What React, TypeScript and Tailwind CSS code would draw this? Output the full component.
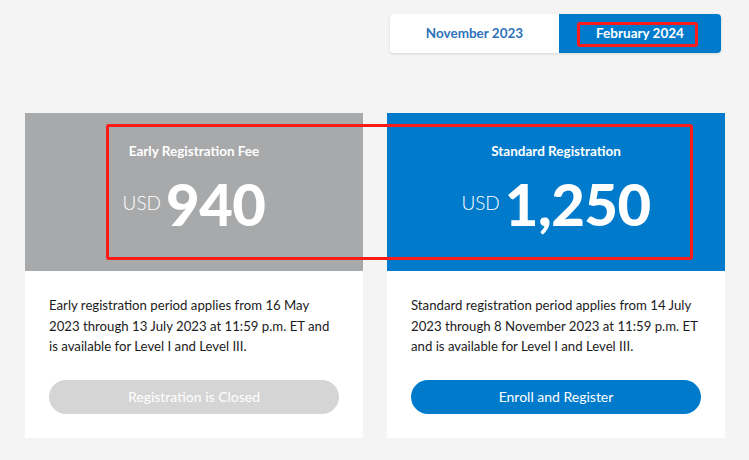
import React from "react";

function Card({
  title,
  price,
  headerBg,
  text,
  button,
  buttonClass,
}: {
  title: string;
  price: string;
  headerBg: string;
  text: string;
  button: string;
  buttonClass: string;
}) {
  return (
    <div className="w-[338px] bg-white flex flex-col">
      <div className={`h-[158px] flex flex-col items-center pt-[30px] ${headerBg}`}>
        <div className="text-[13.5px] leading-[16px] font-bold text-white">{title}</div>
        <div className="flex items-center mt-[15px] text-white">
          <span className="text-[19px] leading-none font-light mr-[5px] -mt-[3px]">USD</span>
          <span className="text-[58px] leading-[60px] font-black tracking-[-0.5px]">{price}</span>
        </div>
      </div>
      <div className="px-[24px] pt-[24px] pb-[24px] flex flex-col">
        <p className="text-[13.2px] leading-[20.5px] text-[#1c1c1c]">{text}</p>
        <button
          className={`mt-[23px] h-[34px] w-full rounded-full text-[14px] ${buttonClass}`}
        >
          {button}
        </button>
      </div>
    </div>
  );
}

export default function App() {
  return (
    <div
      className="relative w-[749px] h-[460px] bg-[#f4f4f4] overflow-hidden"
      style={{ fontFamily: "Lato, 'Open Sans', sans-serif" }}
    >
      <div className="flex justify-end pr-[28px] pt-[14px]">
        <div className="flex h-[39px] rounded-[4px] shadow-[0_1px_3px_rgba(0,0,0,0.12)] overflow-hidden">
          <div className="w-[169px] bg-white flex items-center justify-center text-[13.5px] font-bold text-[#2f72bb]">
            November 2023
          </div>
          <div className="w-[162px] bg-[#007bcc] flex items-center justify-center text-[13.5px] font-bold text-white">
            February 2024
          </div>
        </div>
      </div>
      <div className="flex gap-[24px] pl-[25px] mt-[60px]">
        <Card
          title="Early Registration Fee"
          price="940"
          headerBg="bg-[#a8a9aa]"
          text="Early registration period applies from 16 May 2023 through 13 July 2023 at 11:59 p.m. ET and is available for Level I and Level III."
          button="Registration is Closed"
          buttonClass="bg-[#d5d5d5] text-white"
        />
        <Card
          title="Standard Registration"
          price="1,250"
          headerBg="bg-[#007bcc]"
          text="Standard registration period applies from 14 July 2023 through 8 November 2023 at 11:59 p.m. ET and is available for Level I and Level III."
          button="Enroll and Register"
          buttonClass="bg-[#007bcc] text-white"
        />
      </div>
      <div className="absolute left-[577px] top-[22px] w-[121px] h-[25px] border-[3px] border-[#ff1a1a] rounded-[3px]" />
      <div className="absolute left-[106px] top-[124px] w-[587px] h-[136px] border-[3px] border-[#ff1a1a] rounded-[3px]" />
    </div>
  );
}
